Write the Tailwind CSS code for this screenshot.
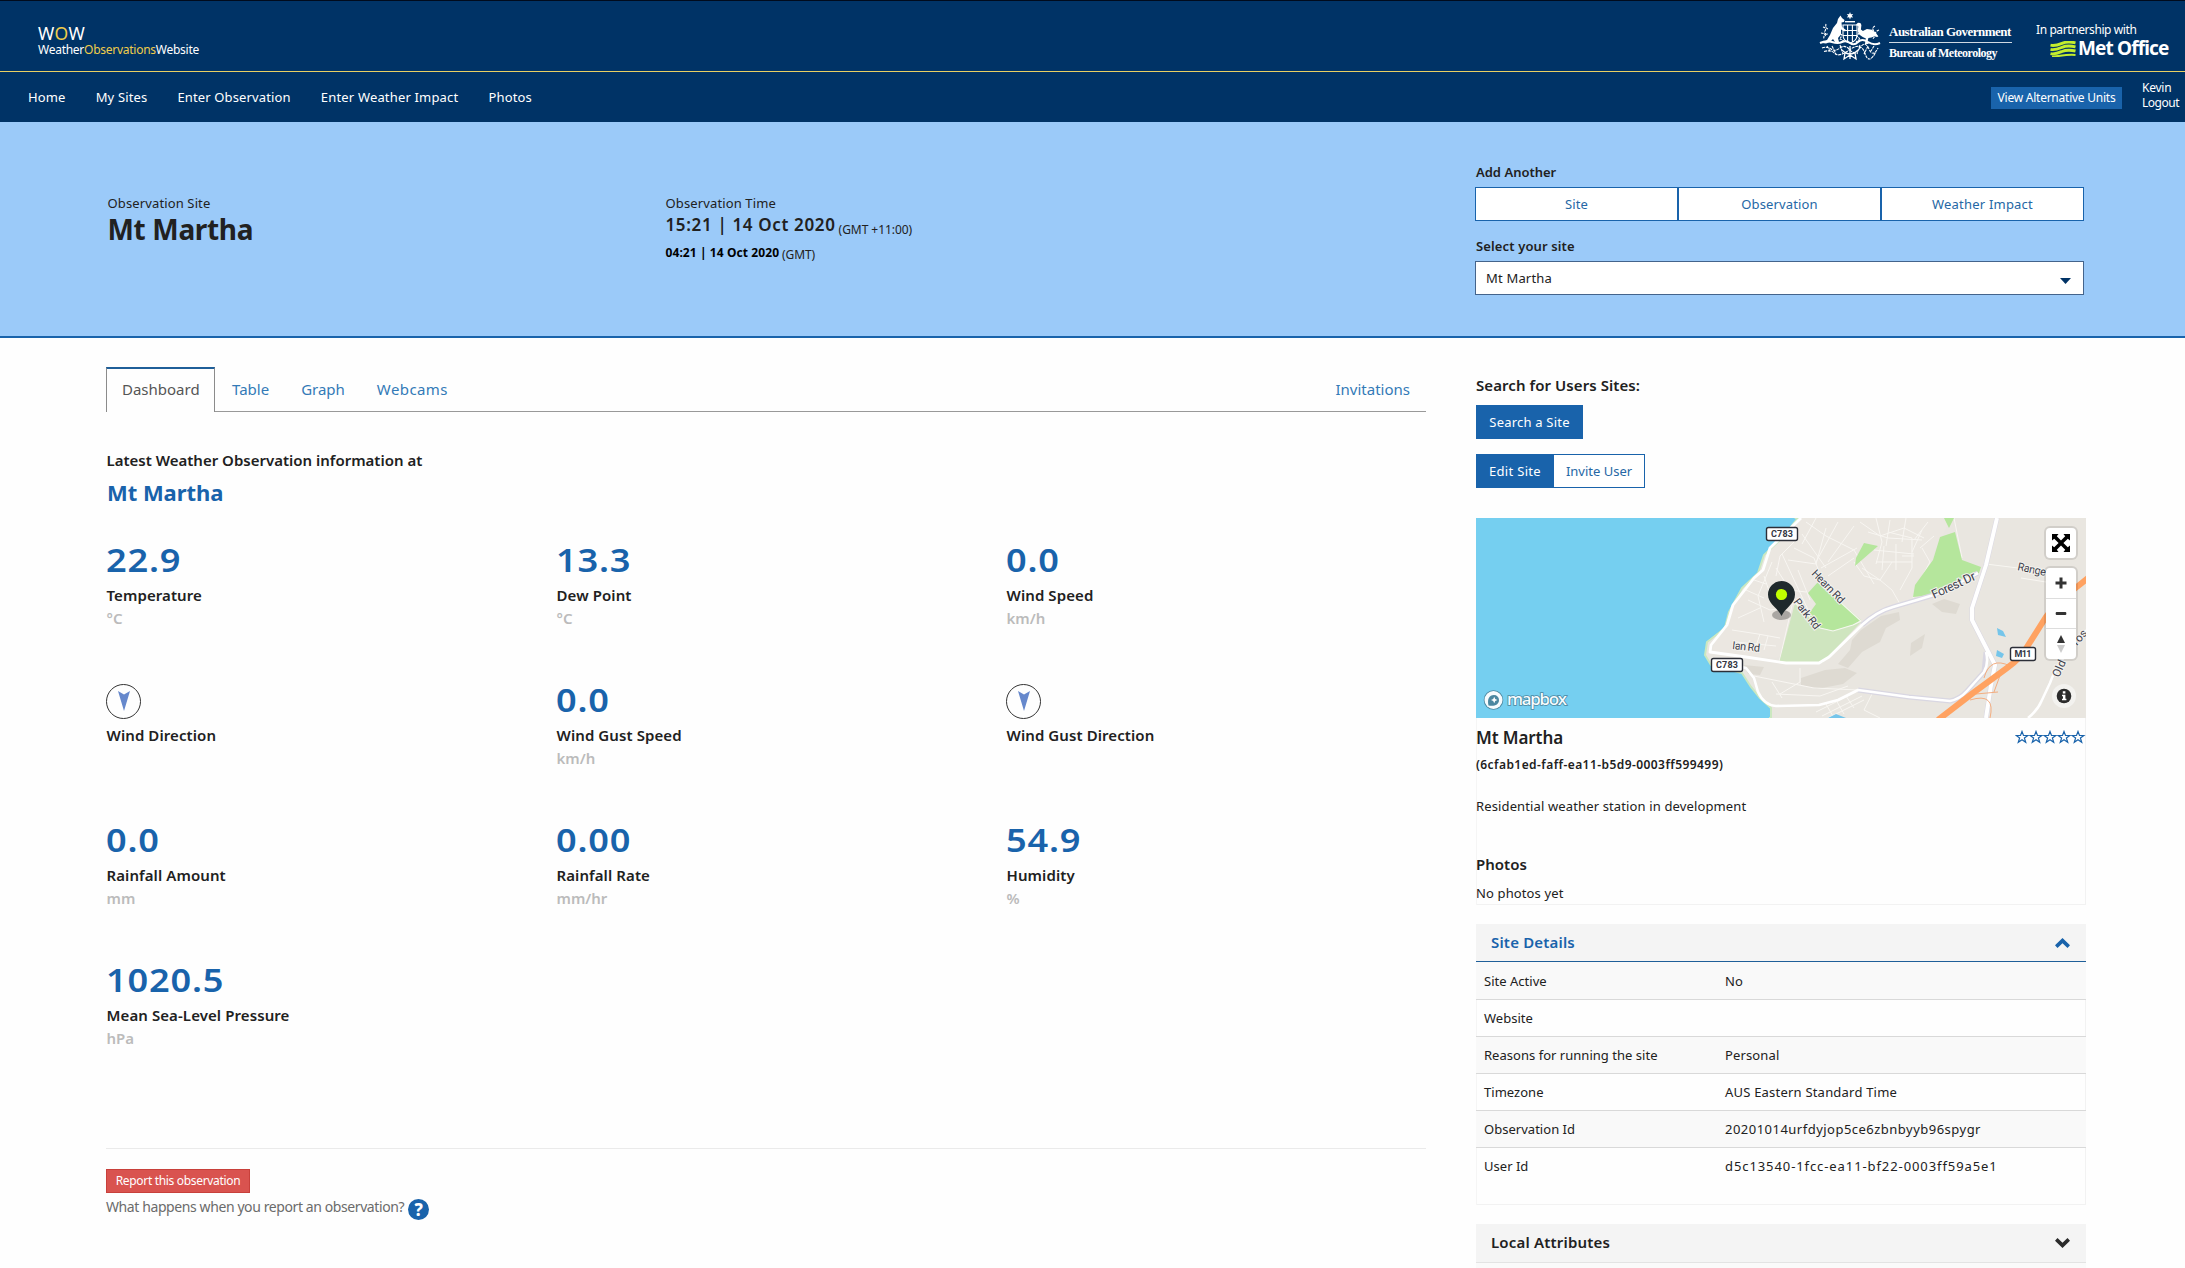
<!DOCTYPE html>
<html lang="en">
<head>
<meta charset="utf-8">
<title>WOW - Mt Martha</title>
<script src="https://cdn.jsdelivr.net/npm/@tailwindcss/browser@4"></script>
</head>
<body class="h-[1268px] w-[2185px] overflow-hidden bg-[#fefefe] font-['Noto_Sans','Open_Sans',sans-serif] text-[13px] tracking-[0.01em] text-[#212121]">

<header class="bg-[#003366] text-white">
  <div class="h-px bg-[#000b1d]"></div>
  <div class="flex h-[70px] justify-between">
    <div class="pt-[22px] pl-[38px]">
      <div class="h-5 text-[17.5px] leading-5 tracking-[0.4px]">W<span class="text-[#f0cd4a]">O</span>W</div>
      <div class="mt-[-1px] h-4 text-[12px] leading-4 tracking-[-0.022em]">Weather<span class="text-[#f0cd4a]">Observations</span>Website</div>
    </div>
    <div class="flex">
      <svg class="mt-[11px] mr-[2px] h-[50px] w-[65px]" viewBox="0 0 65 50" fill="#fff">
        <path d="M32 0l.9 2.200 2.300-.3-1.400 1.800 1.400 1.900-2.300-.3-.9 2.100-.9-2.100-2.300.3 1.400-1.900-1.400-1.800 2.300.3z"/>
        <path d="M27 9h10v1.400H27z"/>
        <path d="M22.500 3.500l1.500 2.500 2.500 2-.5 2-2.500.6.5 4.400 4 3-1 1.500-4-2 0 5-3 3.500 1 4-4 0-2-3-3 3-4 1.500-4-.5 5-3 3-5 3-7 4-5 1-4z"/>
        <path d="M38 12.500l2-1.700 2.400.3 1 2-.5 4.400 2 1.500 4-2 5 .8 4 3 2.500 4-3-.8-4 1.600-3 .4-1 4 1.500 2h-4l1-5.600-3.200-1.400-3.500-2.500-1.500-3.500.6-4.500z"/>
        <g fill="none" stroke="#fff" stroke-width="1.100">
          <path d="M25 13h14v10q0 6-7 8-7-2-7-8zM25 18.500h14M25 23.500h14M29.600 13v17M34.400 13v17"/>
          <path d="M23 15l-2 5 3 3-2 4 4 2M41 21l-2 3 3 3-4 3" stroke-dasharray="2 .8"/>
          <path d="M5 15q4 1 2 4t3 3M8 12q-1 4 2 5M3 21q4 0 5 4M9 22q-4 1-3 5M57 14q-4 2-1 5t-2 5M61 18q-3 1-4 4M60 24q-4 0-5 3" stroke-dasharray="2.500 1"/>
          <path d="M2 31q6-3 12-1t10 0 8 1 8-1 10 0 12 1" stroke-width="2"/>
          <path d="M4 36q5-2 9 1t9-1 10 2 10-2 9 1 9-1M6 39.500q7-2 11 2t15-4 15 4 11-2M14 34l4 8M50 34l-4 8M22 33l3 9M42 33l-3 9M9 34l3 5M56 34l-3 5" stroke-dasharray="3 .8"/>
          <path d="M24 38q8 8 16 0M27 41l-1 6 6-4 6 4-1-6M32 34v13" stroke-width="1.300"/>
        </g>
      </svg>
      <div class="ml-1 w-[123px] pt-[22px] font-['Liberation_Serif',serif] font-bold">
        <div class="h-[19px] text-[13px] leading-[18px] tracking-[-0.039em]">Australian Government</div>
        <div class="h-px bg-[#cfd8e2]"></div>
        <div class="mt-[1px] h-5 text-[12px] leading-[19px] tracking-[-0.04em]">Bureau of Meteorology</div>
      </div>
      <div class="mr-4 ml-6 w-[133px] pt-[21px]">
        <div class="h-4 text-[12px] leading-4 tracking-[-0.034em]">In partnership with</div>
        <div class="flex h-5 items-center pl-[14px]">
          <svg class="mt-px h-4 w-[26px]" viewBox="0 0 26 16" fill="none" stroke="#c4ee2d" stroke-width="2.900"><path d="M.5 4.200C5 5.200 8 4 12 2.300S20 .6 25.500 1.800M.5 8.400C5 9.400 8 8 12 6.300S20 4.600 25.500 5.800M.5 12.600C5 13.600 8 12.200 12 10.500S20 8.800 25.500 10"/><path d="M2 15.600C9 15.800 14 13 25.500 13.900" stroke-width="2"/></svg>
          <div class="ml-[2px] text-[19px] leading-5 font-bold tracking-[-0.045em] whitespace-nowrap">Met Office</div>
        </div>
      </div>
    </div>
  </div>
  <div class="h-px bg-[#e9cf62]"></div>
  <div class="flex h-[50px] justify-between">
    <nav class="flex gap-[30.200px] pl-7 leading-[51px]">
      <a>Home</a><a>My Sites</a><a>Enter Observation</a><a class="tracking-[0.013em]">Enter Weather Impact</a><a>Photos</a>
    </nav>
    <div class="flex text-[12px] tracking-[-0.02em]">
      <div class="mt-[15px] h-[22px] w-[131px] bg-[#1963ab] text-center leading-[22px]">View Alternative Units</div>
      <div class="mt-[8px] ml-5 w-[43px] leading-[15px]"><div>Kevin</div><div class="tracking-[-0.041em]">Logout</div></div>
    </div>
  </div>
</header>

<section class="flex h-[216px] border-b-2 border-[#1963ab] bg-[#9bcaf9]">
  <div class="w-[665.500px] pt-[71px] pl-[107.500px]">
    <div class="h-5 leading-5">Observation Site</div>
    <div class="mt-px h-[30px] text-[28px] leading-[30px] font-bold tracking-[-0.012em]">Mt Martha</div>
  </div>
  <div class="w-[809.500px] pt-[71px]">
    <div class="h-5 leading-5">Observation Time</div>
    <div class="mt-px flex h-[22px]"><span class="text-[17px] leading-[22px] font-semibold tracking-[0.038em]">15:21 | 14 Oct 2020</span><span class="ml-[3px] text-[12px] leading-[31px] tracking-[-0.004em]">(GMT +11:00)</span></div>
    <div class="mt-[7px] flex h-5"><span class="text-[12px] leading-5 font-bold tracking-[0.007em] text-black">04:21 | 14 Oct 2020</span><span class="ml-[3px] text-[12px] leading-6 tracking-[-0.008em]">(GMT)</span></div>
  </div>
  <div class="w-[609px] pt-10">
    <div class="h-[25px] pl-px leading-[21px] font-semibold tracking-normal">Add Another</div>
    <div class="grid h-[34px] grid-cols-3 text-center leading-8 text-[#2567a5]">
      <div class="border border-[#1963ab] bg-white">Site</div>
      <div class="border border-[#1963ab] bg-white">Observation</div>
      <div class="border border-[#1963ab] bg-white tracking-[0.016em]">Weather Impact</div>
    </div>
    <div class="mt-[15px] h-[25px] pl-px leading-[21px] font-semibold">Select your site</div>
    <div class="flex h-[34px] items-center justify-between border border-[#44648c] bg-white pr-3 pl-[10px] leading-8 tracking-[0.014em]">Mt Martha
      <svg class="mt-[6px] h-[6px] w-[11px]" viewBox="0 0 11 6"><path d="M0 0h11L5.500 6z" fill="#036"/></svg>
    </div>
  </div>
</section>

<main class="flex pl-[106px]">
  <div class="w-[1320px] pt-[29px]">
    <div class="flex h-[45px] text-[15px] leading-[44px] tracking-normal text-[#337ab7]">
      <div class="w-[109px] border-x border-t-2 border-x-[#8b8b8b] border-t-[#1f5f99] pl-[15px] leading-[40px] text-[#555]">Dashboard</div>
      <div class="flex flex-1 border-b border-[#999]">
        <div class="pl-[17px]">Table</div><div class="pl-8">Graph</div><div class="pl-8 tracking-[0.027em]">Webcams</div><div class="ml-auto pr-4">Invitations</div>
      </div>
    </div>
    <h2 class="mt-9 h-6 pl-[0.5px] text-[15px] leading-[25px] font-semibold tracking-normal">Latest Weather Observation information at</h2>
    <h3 class="mt-1 h-8 pl-px text-[22px] leading-8 font-bold tracking-[-0.002em] text-[#1963ab]">Mt Martha</h3>
    <div id="readings" class="mt-8 grid grid-cols-[450px_450px_420px]"></div>
    <div class="mt-12 h-px bg-[#eaeaea]"></div>
    <div class="mt-5 h-6 w-[144px] border border-[#c8403b] bg-[#d9534f] text-center text-[12px] leading-[21px] tracking-[-0.027em] text-white">Report this observation</div>
    <div class="flex h-8 text-[14px] leading-7 tracking-[-0.029em] text-[#6b6b6b]">What happens when you report an observation?
      <span class="mt-[6px] ml-1 flex size-[21px] items-center justify-center rounded-full bg-[#1963ab] text-[17px] leading-[21px] font-extrabold tracking-normal text-white">?</span>
    </div>
  </div>

  <aside class="ml-[50px] w-[610px] pt-9">
    <h4 class="h-[23px] text-[15px] leading-[23px] font-semibold tracking-[0.005em]">Search for Users Sites:</h4>
    <div class="mt-2 h-[34px] w-[107px] bg-[#1963ab] text-center leading-[34px] tracking-[0.016em] text-white">Search a Site</div>
    <div class="mt-[15px] flex h-[34px] text-center leading-[34px]">
      <div class="w-[78px] bg-[#1963ab] tracking-[0.024em] text-white">Edit Site</div>
      <div class="w-[91px] border border-l-0 border-[#1963ab] bg-white leading-8 tracking-normal text-[#2567a5]">Invite User</div>
    </div>

    <div class="relative mt-[30px] h-[200px] overflow-hidden">
      <svg class="h-[200px] w-[610px]" viewBox="0 0 610 200" fill="none">
        <path d="M0 0h610v200H0z" fill="#e9e6e0"/>
        <!-- residential blocks -->
        <path d="M325 0h150l-15 30-20 55-60 20-80 35-64-5 8-35 30-60z" fill="#ebe7e1"/>
        <g fill="#dedad2">
          <path d="M385 112l20-14 18-4 1 8-14 8-6 14-18 10-14 16-10-4 12-14 2-10zM325 160l24-8 20-2 12 5-14 11-26 5-16-4zM435 125l14-9-3 14-12 8zM456 86l12-5 16 5-4 10-14-2zM268 147l20 2-4 8-12-1z"/>
        </g>
        <!-- minor streets -->
        <g stroke="#f8f6f2" stroke-width="1">
          <path d="M330 4l20 14 28 14 20 34M318 30l20 10 8 22M312 42l28 4 10-36M340 0l-14 26M362 4l-22 40M378 8l-26 36M345 50l36-20M352 58l26-18M322 52l12 30M300 50l14 22 16 2M288 58l10 30M296 44l-14 34 6 26M272 82l22 10 14-2M262 100l22-10M256 112l26 4 22 4M260 124l40 4M284 116l-6 18M274 122l-6 12M292 118l-4 14M300 58l4-20 14-14M306 36l28 60M326 16l24 34M270 72l18 8M278 62l12 4"/>
          <path d="M384 4l20 14 24-8 20 10M392 14l20 6 34 2M400 0l6 24-6 22M414 2l-4 26M430 0l-4 24M420 26v26M408 28l-2 24M400 44h36M398 32l40 4M436 20v30l-12 22M446 12l-10 22M452 4l-14 18M458 18l-14 12M386 50l18 12 12 10 8 14M404 62l12-18M378 44l10 14 16 4M426 38h12M412 14l24 6M446 30l8 14-12 22-5 14"/>
          <path d="M278 158l60 12 44 2M296 164l10 16M324 150v14l-20 12M300 176l44 2 28-10M340 194l40-20M346 198l40-20M352 200l36-18M350 186l8 14M360 182l8 14M370 178l8 12M398 172l-10 20 16 8M510 46l32 4M545 60l50 8M486 40l-8-40M303 145l14-62"/>
        </g>
        <path d="M0 0H322L306 20 288 37 282 55 266 70 253 94 249 110 231 124 229 137 235 147 266 155 275 169 284 180 295 190V200H0z" fill="#75cff0" stroke="#cbe8c0" stroke-width="2"/>
        <path d="M0 0H319L304 19 286 37 280 55 264 70 251 94 247 110 229 124 227 137 233 149 264 157 273 170 282 181 293 191V200H0z" fill="#75cff0"/>
        <g fill="#b5e69c">
          <path d="M342 64L385 102 377 107 357 113 344 110 332 97 340 86 332 75z"/>
          <path d="M388 25l14 3-23 20 1-8zM464 19l15-5 7 28 19 7-2 6-39 21-27 3 2-12 18-25zM468 0h10l-5 10z"/>
        </g>
        <path d="M319 85l13 12 12 13 13 3 28-9-39 41H303z" fill="#cfe5bf"/>
        <path d="M319 85l13 12 12 13 13 3 20-6 8-4M342 64l43 39" stroke="#f5f7ef" stroke-width="1.200"/>
        <path d="M521 110l6 3 3 6-8-2zM521 132l7 4-2 4-6-2zM352 200l8-4 10 4z" fill="#75c5ea"/>
        <!-- main roads -->
        <g stroke="#d9d7e2" stroke-width="5" stroke-linejoin="round">
          <path d="M386 107C396 98 406 92 417 89L441 82 461 76Q485 64 502 55M521 0L510 47 496 90V102L519 147 515 167 510 200M382 172L433 179 474 183Q484 181 491 173L508 154 510 134"/>
        </g>
        <g stroke="#fff" stroke-linejoin="round">
          <path d="M325 0L294 30 287 52 278 60 257 87 251 107 235 127 234 134 270 139 310 145H343L353 139 386 107C396 98 406 92 417 89L441 82 461 76Q485 64 502 55" stroke-width="2.800"/>
          <path d="M250 146L270 150 278 160 282 174Q288 187 300 188L343 187 362 182 382 172 433 179 474 183Q484 181 491 173L508 154Q513 145 510 134" stroke-width="2.600"/>
          <path d="M521 0L510 47 496 90V102L519 147 515 167 510 200" stroke-width="4"/>
          <path d="M552 200Q562 192 566 182L574 165Q582 142 611 112" stroke-width="2.500"/>
        </g>
        <path d="M494 182Q520 174 514 200M508 160Q514 138 534 148M500 176l22-2M526 152l-8 22" stroke="#f3ad80" stroke-width="1"/>
        <path d="M462 202L497 175 531 150Q545 140 551 129L570 99Q578 87 597 72L612 60" stroke="#ffa261" stroke-width="6"/>
        <g fill="#3d3f4c" stroke="#f4f2ee" stroke-width="2" paint-order="stroke" font-family="Roboto, sans-serif" font-size="11">
          <text transform="translate(335 56) rotate(46)" textLength="42">Hearn Rd</text>
          <text transform="translate(317 84) rotate(52)" textLength="36">Park Rd</text>
          <text transform="translate(256 131) rotate(6)" textLength="28">Ian Rd</text>
          <text transform="translate(458 81) rotate(-25)" font-size="12.500" textLength="47">Forest Dr</text>
          <text transform="translate(541 52) rotate(12)" textLength="29">Range</text>
          <text transform="translate(583 160) rotate(-66)" font-size="11.500">Old</text>
          <text transform="translate(601 128) rotate(-48)" font-size="11.500">ros</text>
        </g>
        <g fill="#fff" stroke="#2c2f38" stroke-width="1.400">
          <rect x="290.500" y="9.500" width="31" height="13" rx="2"/><rect x="235.500" y="140.500" width="31" height="13" rx="2"/><rect x="534.500" y="129.500" width="25" height="13" rx="2"/>
        </g>
        <g fill="#33363f" font-family="Roboto, sans-serif" font-weight="700" font-size="9" text-anchor="middle">
          <text x="306" y="19.300" textLength="22">C783</text><text x="251" y="150.300" textLength="22">C783</text><text x="547" y="139.300" textLength="17">M11</text>
        </g>
        <!-- marker -->
        <ellipse cx="305.500" cy="97" rx="9.500" ry="5" fill="#000" opacity=".28"/>
        <path d="M305.500 98C302 90 292 86 292 76.500a13.500 13.500 0 0 1 27 0C319 86 309 90 305.500 98z" fill="#1f292c"/>
        <circle cx="305.500" cy="76.500" r="5.600" fill="#c2ff00"/>
        <!-- mapbox wordmark -->
        <g stroke="#4b87a0" stroke-width="1.600" paint-order="stroke" fill="#f7fcfe">
          <circle cx="17.500" cy="182" r="9"/>
          <text x="31" y="187" font-family="Noto Sans, sans-serif" font-weight="500" font-size="17" textLength="60">mapbox</text>
        </g>
        <path d="M12.500 187.500c-1.500-6 .5-10.500 5.500-10.500a5 5 0 0 1 5 5c0 5-5 6.500-10.500 5.500z" fill="#4b87a0"/>
        <path d="M18.200 178.700l1 2.300 2.200 1-2.200 1-1 2.200-1-2.200-2.200-1 2.200-1z" fill="#fff"/>
        <!-- attribution -->
        <circle cx="588" cy="178" r="12" fill="#f3f2ef"/><circle cx="588" cy="178" r="7.300" fill="#2b2b2b"/>
        <path d="M586.800 173.300h2.600v2.200h-2.600zM586 176.800h3.400v4h1v1.400H586v-1.400h1v-2.600h-1z" fill="#fff"/>
      </svg>
      <div class="absolute top-[10px] left-[570px] flex size-[30px] items-center justify-center rounded bg-white ring-2 ring-black/10">
        <svg class="size-[18px]" viewBox="0 0 18 18"><path d="M0 0h6.500L4.800 2.200 9 6.600l4.200-4.400L11.500 0H18v6.500l-2.200-1.700L11.400 9l4.400 4.200 2.200-1.700V18h-6.500l1.700-2.200L9 11.400l-4.200 4.400L6.500 18H0v-6.500l2.200 1.700L6.600 9 2.200 4.800 0 6.500z"/></svg>
      </div>
      <div class="absolute top-[50px] left-[570px] w-[30px] divide-y divide-[#ddd] rounded bg-white ring-2 ring-black/10">
        <svg class="h-[31px] w-[30px]" viewBox="0 0 30 30"><path d="M13.500 9.500h3v4h4v3h-4v4h-3v-4h-4v-3h4z" fill="#333"/></svg>
        <svg class="h-[30px] w-[30px]" viewBox="0 0 30 30"><rect x="9.500" y="13.500" width="11" height="3" rx="1" fill="#333"/></svg>
        <svg class="h-[30px] w-[30px]" viewBox="0 0 30 30"><path d="M11 14l4-8 4 8z" fill="#333"/><path d="M11 16l4 8 4-8z" fill="#ccc"/></svg>
      </div>
    </div>

    <div class="h-[187px] pt-2 shadow-[inset_1px_0_#f5f5f5,inset_-1px_-1px_#f2f2f2]">
      <div class="flex h-6 justify-between">
        <span class="text-[17px] leading-6 font-semibold tracking-[-0.006em]">Mt Martha</span>
        <svg class="mt-1 h-[14px] w-[71px]" viewBox="0 0 71 14" fill="none" stroke="#1963ab" stroke-width="1.200">
          <defs><path id="star" d="M7 1.500l1.500 4h4.300L9.400 8l1.300 4.300L7 9.700l-3.700 2.600L4.600 8 1.200 5.500h4.300z"/></defs>
          <use href="#star"/><use href="#star" x="14"/><use href="#star" x="28"/><use href="#star" x="42"/><use href="#star" x="56"/>
        </svg>
      </div>
      <div class="mt-1 h-5 text-[12px] leading-[21px] font-semibold tracking-[0.036em]">(6cfab1ed-faff-ea11-b5d9-0003ff599499)</div>
      <div class="mt-[22px] h-5 leading-5">Residential weather station in development</div>
      <div class="mt-[36px] h-6 text-[15px] leading-6 font-semibold tracking-normal">Photos</div>
      <div class="mt-[7px] h-5 leading-5">No photos yet</div>
    </div>

    <div class="mt-[19px] flex h-[38px] items-center justify-between border-b border-[#1f5f99] bg-[#f4f4f4] pr-4 pl-[15px] text-[15px] leading-[37px] font-semibold tracking-[0.012em] text-[#1963ab]">Site Details
      <svg class="mt-px h-[10px] w-[15px]" viewBox="0 0 15 10"><path d="M7.500 0L15 7.300 12.500 10l-5-4.800-5 4.800L0 7.300z" fill="#1963ab"/></svg>
    </div>
    <div id="details" class="h-[243px] shadow-[inset_1px_0_#f5f5f5,inset_-1px_-1px_#f2f2f2]"></div>
    <div class="mt-[19px] flex h-[39px] items-center justify-between border-b border-[#e3e3e3] bg-[#f4f4f4] pr-4 pl-[15px] text-[15px] leading-[37px] font-semibold tracking-[0.012em]"><span class="-mt-px">Local Attributes</span>
      <svg class="h-[10px] w-[15px]" viewBox="0 0 15 10"><path d="M7.500 10L0 2.700 2.500 0l5 4.800 5-4.800L15 2.700z" fill="#2b2b2b"/></svg>
    </div>
    <div class="h-[5px] bg-[#fafafa]"></div>
  </aside>
</main>

<script>
  const arrow = `<svg class="mt-px size-[35px]" viewBox="0 0 35 35"><circle cx="17.500" cy="17.500" r="17" fill="none" stroke="#333"/><path d="M12 7l6 3.500L24 7l-6 20z" fill="#6688cc"/></svg>`;
  const readings = [
    ["22.9", "Temperature", "°C"], ["13.3", "Dew Point", "°C"], ["0.0", "Wind Speed", "km/h"],
    [null, "Wind Direction", ""], ["0.0", "Wind Gust Speed", "km/h"], [null, "Wind Gust Direction", ""],
    ["0.0", "Rainfall Amount", "mm"], ["0.00", "Rainfall Rate", "mm/hr"], ["54.9", "Humidity", "%"],
    ["1020.5", "Mean Sea-Level Pressure", "hPa"]
  ];
  document.getElementById("readings").innerHTML = readings.map(([v, l, u]) => `
    <div class="h-[140px] text-[15px] font-semibold tracking-[0.006em]">
      <div class="flex h-[41px] items-center text-[32px] leading-[40px] tracking-[0.022em] text-[#1963ab]">${v === null ? arrow : `<span class="-mt-px origin-left scale-x-[1.13]">${v}</span>`}</div>
      <div class="h-[29px] pl-[0.5px] leading-[29px]">${l}</div>
      <div class="h-[17px] pl-[0.5px] leading-[17px] tracking-normal text-[#bbb]">${u}</div>
    </div>`).join("");

  const details = [
    ["Site Active", "No", ""], ["Website", "", ""], ["Reasons for running the site", "Personal", ""],
    ["Timezone", "AUS Eastern Standard Time", "tracking-[0.016em]"],
    ["Observation Id", "20201014urfdyjop5ce6zbnbyyb96spygr", "tracking-[0.037em]"],
    ["User Id", "d5c13540-1fcc-ea11-bf22-0003ff59a5e1", "tracking-[0.07em]"]
  ];
  document.getElementById("details").innerHTML = details.map(([k, v, t], i) => `
    <div class="flex pl-2 ${i ? "h-[37px] leading-[37px]" : "h-[38px] leading-[38px]"} ${i < 5 ? "border-b border-[#d9d9d9]" : ""} ${i % 2 ? "" : "bg-[#f9f9f9]"}">
      <div class="w-[241px] tracking-[0.002em]">${k}</div><div class="${t}">${v}</div>
    </div>`).join("");
</script>
</body>
</html>
